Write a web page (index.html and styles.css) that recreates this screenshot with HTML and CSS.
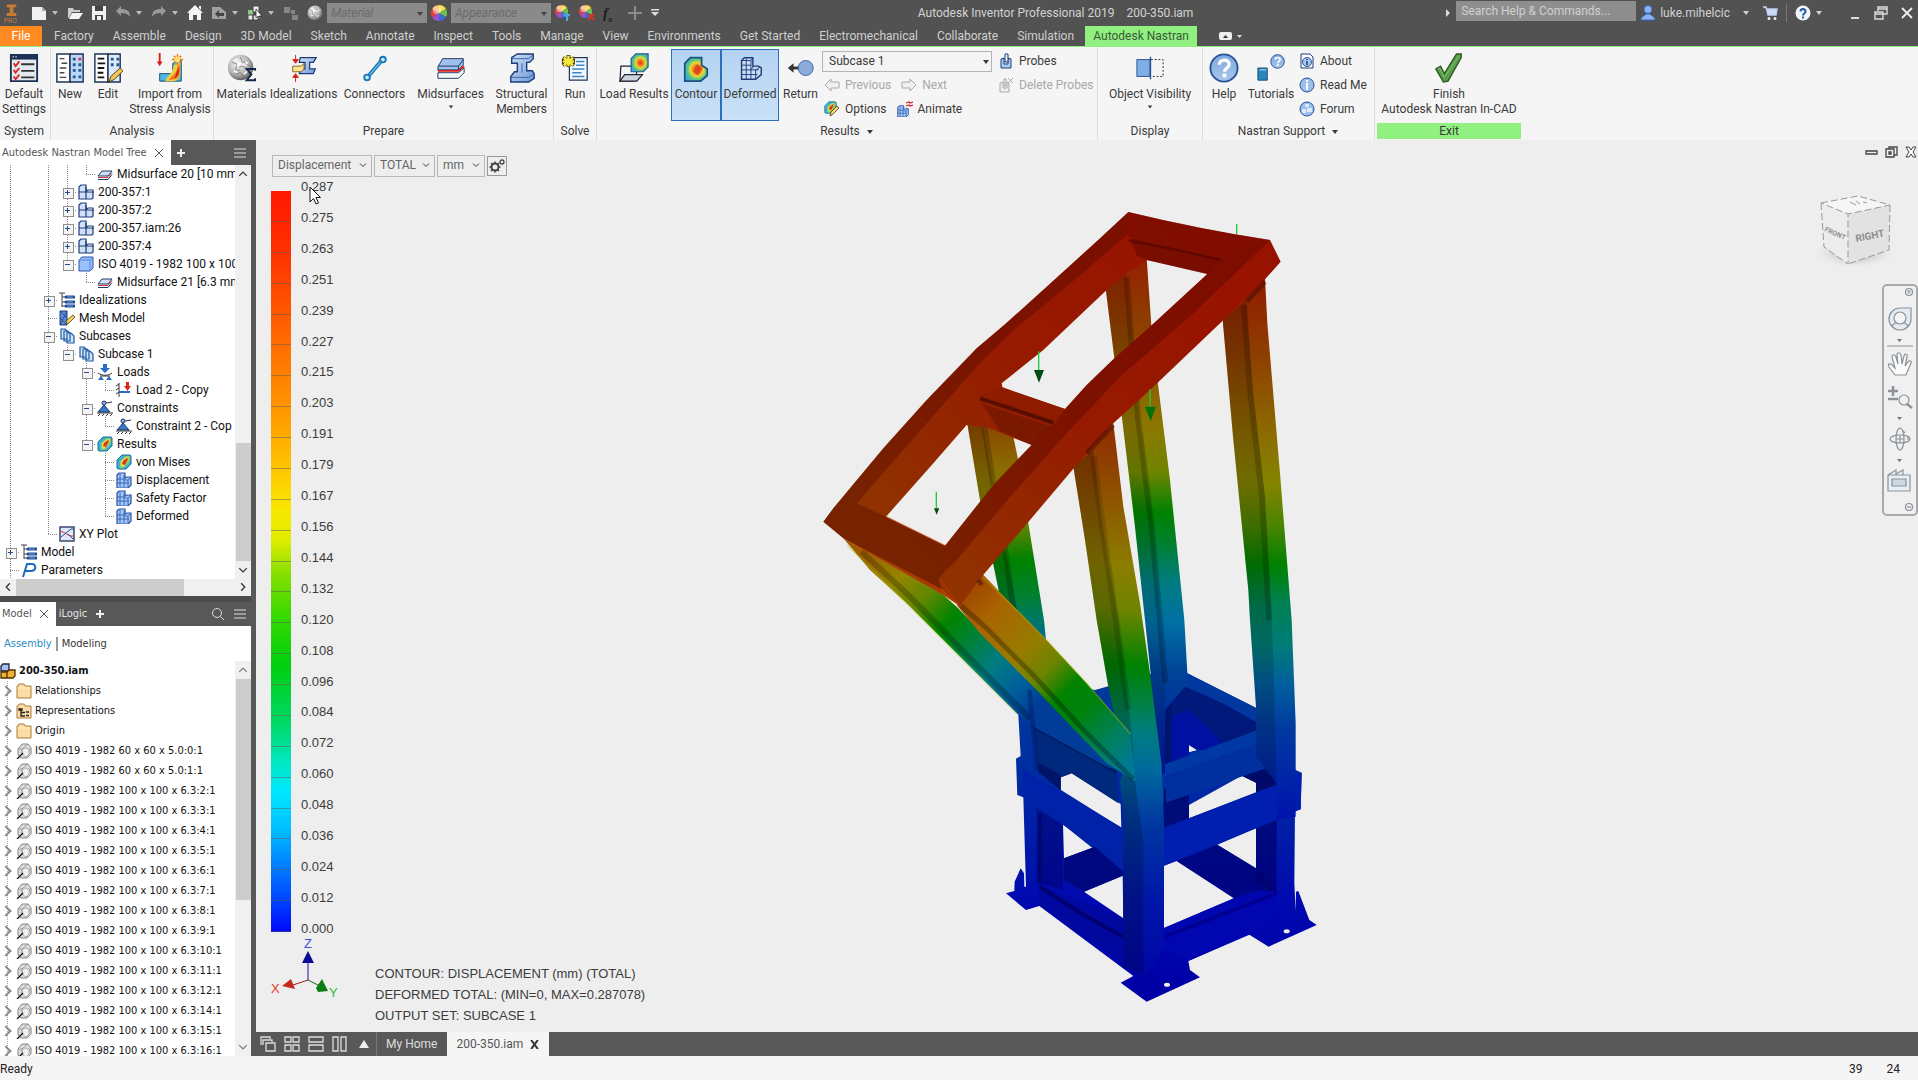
FILE: index.html
```
<!DOCTYPE html>
<html lang="en">
<head>
<meta charset="utf-8">
<title>Autodesk Inventor Professional 2019 - 200-350.iam</title>
<link rel="stylesheet" href="styles.css">
</head>
<body>
<svg class="sprite" aria-hidden="true">
  <defs>
    <radialGradient id="heat" cx=".55" cy=".5" r=".6"><stop offset="0" stop-color="#d8321c"/><stop offset=".3" stop-color="#f08a1e"/><stop offset=".5" stop-color="#e8d83c"/><stop offset=".7" stop-color="#5cc878"/><stop offset="1" stop-color="#38a8e0"/></radialGradient>
    <linearGradient id="steel" x1="0" y1="0" x2="1" y2="1"><stop offset="0" stop-color="#d4e4f8"/><stop offset="1" stop-color="#6a96d8"/></linearGradient>
    <linearGradient id="blueball" x1="0" y1="0" x2="0" y2="1"><stop offset="0" stop-color="#7ea8dc"/><stop offset="1" stop-color="#a8c6ec"/></linearGradient>
    <radialGradient id="stone" cx=".4" cy=".35" r=".7"><stop offset="0" stop-color="#fafafa"/><stop offset=".6" stop-color="#b4b4b4"/><stop offset="1" stop-color="#505050"/></radialGradient>
  </defs>
  <symbol id="caret" viewBox="0 0 8 8"><path d="M1 2h6L4 6z" fill="currentColor"/></symbol>
  <symbol id="chev" viewBox="0 0 8 8"><path d="M1 2.500l3 3 3-3" fill="none" stroke="currentColor"/></symbol>
  <symbol id="wheel" viewBox="0 0 16 16"><path d="M8 8V0a8 8 0 0 1 7 4z" fill="#f6e04a"/><path d="M8 8l7-4a8 8 0 0 1 0 8z" fill="#6cc04a"/><path d="M8 8l7 4a8 8 0 0 1-7 4z" fill="#3a6ad8"/><path d="M8 8v8a8 8 0 0 1-7-4z" fill="#a050c8"/><path d="M8 8l-7 4a8 8 0 0 1 0-8z" fill="#e04438"/><path d="M8 8L1 4a8 8 0 0 1 7-4z" fill="#f8a050"/><circle cx="6" cy="5" r="4" fill="#fff" opacity=".45"/></symbol>
  <symbol id="ball" viewBox="0 0 16 16"><circle cx="8" cy="8" r="7.500" fill="url(#stone)"/><path d="M3 5l3 1-1 3 3 1M8 2l1 3 3-1M7 8l3-1 2 3M5 12l3-1 2 3M12 6l2 2" stroke="#666" fill="none" stroke-width=".4"/><path d="M4 4l2-1M9 6l2 1M4 10l2 1M10 12l2-2M6 7l2-2M11 4l1 2" stroke="#fff" fill="none" stroke-width=".8"/></symbol>
  <symbol id="qmark" viewBox="0 0 32 32"><circle cx="16" cy="16" r="14.500" fill="url(#blueball)" stroke="#2a5298" stroke-width="2"/><path d="M11 12.500c0-6.500 10.500-6.500 10.500-.5 0 4-5 4-5 8" fill="none" stroke="#fff" stroke-width="3.600"/><rect x="14.500" y="22" width="4" height="4" fill="#fff"/></symbol>
  <symbol id="plate" viewBox="0 0 16 16"><path d="M1 10l4-5h10l-4 5z" fill="#cfe0f6" stroke="#223a66"/><path d="M1 11.500h10l4-5" fill="none" stroke="#d03a3a"/><path d="M1 13.500h10l4-5" fill="none" stroke="#223a66"/></symbol>
  <symbol id="asm" viewBox="0 0 16 16"><path d="M1 3l2-2h5v7h7v6l-1 1H1z" fill="#cfe0f8" stroke="#1e3c78" stroke-width="1.200"/><path d="M1 8h7M8 3v12M8 8l2-2h5v3" fill="none" stroke="#1e3c78" stroke-width="1.200"/></symbol>
  <symbol id="cube" viewBox="0 0 16 16"><path d="M1 4l3-3h11v11l-3 3H1z" fill="#9cc0ff" stroke="#2a52a8"/><path d="M1 4h11v11M12 4l3-3" fill="none" stroke="#5a86d8"/></symbol>
  <symbol id="ideal" viewBox="0 0 16 16"><path d="M0 1h6M3 1v14M3 5h4M3 10h4M3 14h4" fill="none" stroke="#444"/><path d="M7 5h8M7 10h8M7 14h8" stroke="#1e4a94" stroke-width="3" stroke-linecap="round"/><path d="M8 5h6M8 10h6M8 14h6" stroke="#6a9ee0"/></symbol>
  <symbol id="mesh" viewBox="0 0 16 16"><path d="M1 1h7v14H1z" fill="#5a8ad0" stroke="#1e3c78"/><path d="M1 15L8 1M1 8l7 7M1 1l7 7" stroke="#1e3c78" stroke-width=".7"/><path d="M7 14l1-4 6-5 2 2-6 6z" fill="#f4d060" stroke="#604010" stroke-width=".8"/></symbol>
  <symbol id="pages" viewBox="0 0 16 16"><path d="M2 1h4l2 2v8H2z M5 3h4l2 2v8H5z M8 5h4l3 3v7H8z" fill="#cfe4fa" stroke="#1e5aa0" stroke-width="1.200"/></symbol>
  <symbol id="loads" viewBox="0 0 16 16"><path d="M6 0h4v4h3L8 9 3 4h3z" fill="#2a6ac8"/><path d="M1 9c4 3 10 3 14 0M3 12h10" fill="none" stroke="#333"/><path d="M1 16l3-4 3 4zM9 16l3-4 3 4z" fill="#2a6ac8"/></symbol>
  <symbol id="load" viewBox="0 0 16 16"><path d="M3 1v14M0 4l3-2M0 8l3-2M0 12l3-2" stroke="#333"/><path d="M3 10h11" stroke="#2a6ac8" stroke-width="2"/><path d="M10 0h3v4h2l-3.500 5L8 4h2z" fill="#d8281c"/></symbol>
  <symbol id="constr" viewBox="0 0 16 16"><path d="M1 12l6-7 6 7z" fill="#3a78d0" stroke="#1a3060"/><circle cx="7" cy="3" r="2" fill="#8ab8f0" stroke="#1a3060"/><path d="M9 3l6-1M0 13h16M1 16l2-2M5 16l2-2M9 16l2-2M13 16l2-2" stroke="#333"/></symbol>
  <symbol id="result" viewBox="0 0 16 16"><path d="M1 6l5-5h8l1 1v8l-5 5H2l-1-1z" fill="#38b4d8" stroke="#20688c"/><path d="M4 14V7l6-5h4v5l-6 7z" fill="#88d070"/><path d="M5 12V7l5-4 3 1-3 5-3 4z" fill="#f0d840"/><path d="M6 10l1-3 4-3 1 1-3 6z" fill="#d8381c"/></symbol>
  <symbol id="deform" viewBox="0 0 16 16"><path d="M1 3l2-2h6v5l2-1h4v8l-3 3H1z" fill="#a4c8fc" stroke="#2450a0" stroke-width="1.200"/><path d="M1 7h7M1 11h12M4 2v13M8 3v12M12 8v7M8 8h4l3-3" fill="none" stroke="#2450a0" stroke-width=".8"/></symbol>
  <symbol id="plot" viewBox="0 0 16 16"><path d="M1 1h14v14H1z" fill="#dfe8f8" stroke="#3a4a70" stroke-width="1.500"/><path d="M1 6c4-2 7 5 14 4" fill="none" stroke="#d03030"/><path d="M2 11L12 3h3M9 8l5 5" fill="none" stroke="#2a4a90"/></symbol>
  <symbol id="param" viewBox="0 0 16 16"><path d="M2 15L6 2h5c5 0 4 7-1 7H4" fill="none" stroke="#1e6ac0" stroke-width="2"/></symbol>
  <symbol id="folder" viewBox="0 0 16 16"><path d="M1 15V3h1l1-2h5l1 2h6v12z" fill="#fbdca4" stroke="#a87c3c"/><path d="M2 5h12" stroke="#fff0cc"/></symbol>
  <symbol id="folderrep" viewBox="0 0 16 16"><path d="M1 15V3h1l1-2h5l1 2h6v12z" fill="#fbdca4" stroke="#a87c3c"/><path d="M3 6h3v1H3zM5 7v6h4M5 9.500h4M10 9h3M10 12.500h3" fill="none" stroke="#222" stroke-width="1.300"/></symbol>
  <symbol id="part" viewBox="0 0 16 16"><path d="M2 6l4-5h6l3 4v6l-4 4H5l-3-3z" fill="#dedede" stroke="#848484"/><path d="M2 6h4l6-5M6 6v5M12 9l3-4M11 10v5" stroke="#9c9c9c" fill="none"/><path d="M6 7l3-2 4 1v5l-3 3-3-2z" fill="#f0f0f0" stroke="#a0a0a0" stroke-width=".8"/><path d="M1 16l6-6" stroke="#111" stroke-width="1.300"/></symbol>
  <symbol id="root" viewBox="0 0 16 16"><path d="M1 3l2-2h6v7H1z" fill="#a8c0f0" stroke="#1a2440" stroke-width="1.300"/><path d="M1 9h6v6H1zM7 9l2-2h6v6l-2 2H7z" fill="#f4b030" stroke="#4a3000" stroke-width="1.300"/></symbol>
</svg>

<header class="titlebar">
  <div class="quick">
    <svg class="logo" viewBox="0 0 24 24"><path d="M7 3h10v3h-3v6h3v3H7v-3h3V6H7z" fill="#c87a34"/><text x="4" y="22" font-size="7" fill="#c87a34">PRO</text></svg>
    <svg class="i16" viewBox="0 0 16 16"><path d="M1 2h10l4 4v9H1z" fill="#f0f0f0"/><path d="M11 2v4h4z" fill="#aaa"/></svg>
    <svg class="i8 tuck"><use href="#caret"/></svg>
    <svg class="i16" viewBox="0 0 16 16"><path d="M1 3h5l1 2h6v2H5l-3 6H1z" fill="#ccc"/><path d="M5 8h11l-4 6H2z" fill="#f4f4f4"/></svg>
    <svg class="i16" viewBox="0 0 16 16"><path d="M1 1h14v14H1z" fill="#f0f0f0"/><path d="M4 1h8v5H4zM4 10h8v5H4z" fill="#444"/><path d="M6 11h4v4H6z" fill="#f0f0f0"/></svg>
    <svg class="i16" viewBox="0 0 16 16"><path d="M1 6l5-5v3c6 0 9 2 9 8-2-3-4-4-9-4v3z" fill="#999"/></svg>
    <svg class="i8 tuck"><use href="#caret"/></svg>
    <svg class="i16" viewBox="0 0 16 16"><path d="M15 6l-5-5v3c-6 0-9 2-9 8 2-3 4-4 9-4v3z" fill="#999"/></svg>
    <svg class="i8 tuck"><use href="#caret"/></svg>
    <svg class="i16" viewBox="0 0 16 16"><path d="M8 0l8 8h-2v7h-4v-5H6v5H2V8H0z" fill="#f4f4f4"/><path d="M12 1h2v4l-2-2z" fill="#f4f4f4"/></svg>
    <svg class="i16" viewBox="0 0 16 16"><path d="M1 2h8l6 5v7H1z" fill="#a0a0a0"/><path d="M4 9l4-4v3h5v3H8v2z" fill="#444"/></svg>
    <svg class="i8 tuck"><use href="#caret"/></svg>
    <svg class="i16" viewBox="0 0 16 16"><path d="M1 5h5v5H1z" fill="#8ac88a"/><path d="M6 1h6v6H6zM1 10h5v5H1zM6 10h5v5H6z" fill="#ececec" stroke="#444"/><path d="M9 4v9l2-2 2 4 1-1-2-3h3z" fill="#fff" stroke="#222" stroke-width=".7"/></svg>
    <svg class="i8 tuck"><use href="#caret"/></svg>
    <svg class="i16" viewBox="0 0 16 16"><path d="M1 2h6v6H1zM8 5h4v4H8zM9 10h6v5H9z" fill="#858585"/></svg>
    <svg class="i16"><use href="#ball"/></svg>
    <label class="tcombo tuck"><select aria-label="Material"><option>Material</option></select><svg class="i8"><use href="#caret"/></svg></label>
    <svg class="i16 tuck"><use href="#wheel"/></svg>
    <label class="tcombo tuck"><select aria-label="Appearance"><option>Appearance</option></select><svg class="i8"><use href="#caret"/></svg></label>
    <svg class="i16 tuck" viewBox="0 0 16 16"><use href="#wheel" width="13" height="13"/><path d="M7 9h9l-3 3v4h-2v-4z" fill="#48a8e8"/></svg>
    <svg class="i16" viewBox="0 0 16 16"><use href="#wheel" width="13" height="13"/><path d="M9 9l6 6M15 9l-6 6" stroke="#d83420" stroke-width="2"/></svg>
    <span class="fx">f<sub>x</sub></span>
    <svg class="i16" viewBox="0 0 16 16"><path d="M8 1v14M1 8h14" stroke="#8c8c8c" stroke-width="2"/></svg>
    <svg class="i8" viewBox="0 0 8 8"><path d="M0 0h8v1.500H0zM0 3h8L4 7z" fill="#ddd"/></svg>
  </div>
  <div class="apptitle"><span>Autodesk Inventor Professional 2019</span><span>200-350.iam</span></div>
  <div class="account">
    <svg class="i8" viewBox="0 0 8 8"><path d="M2 0l4 4-4 4z" fill="#ddd"/></svg>
    <input class="search" type="text" aria-label="Search" placeholder="Search Help &amp; Commands...">
    <svg class="i16" viewBox="0 0 16 16"><circle cx="8" cy="4.500" r="4" fill="#8ab4f0" stroke="#3a66b8"/><path d="M1 15c0-4 4-4 5-6h4c1 2 5 2 5 6z" fill="#8ab4f0" stroke="#3a66b8"/></svg>
    <span class="user">luke.mihelcic</span>
    <svg class="i8"><use href="#caret"/></svg>
    <svg class="i16" viewBox="0 0 16 16"><path d="M1 2h3l2 8h8l1-6H5" fill="#d0dcf4" stroke="#c0d0f0" stroke-width="1.400"/><circle cx="7" cy="13.500" r="1.500" fill="#eee"/><circle cx="13" cy="13.500" r="1.500" fill="#eee"/></svg>
    <i class="rule"></i>
    <svg class="i16" viewBox="0 0 16 16"><circle cx="8" cy="8" r="7.500" fill="#f0f4fc"/><path d="M5.500 6.500c0-3.500 5-3.500 5 0 0 2-2.500 2-2.500 4" fill="none" stroke="#2a58a8" stroke-width="2"/><path d="M7 11.500h2v2H7z" fill="#2a58a8"/></svg>
    <svg class="i8"><use href="#caret"/></svg>
    <svg class="i16 win" viewBox="0 0 16 16"><path d="M4 12h8v2H4z" fill="#ddd"/></svg>
    <svg class="i16 win" viewBox="0 0 16 16"><path d="M5 6V2h9v7h-4M5 4h9M2 7h8v7H2zM2 9h8" fill="none" stroke="#ddd" stroke-width="1.400"/></svg>
    <svg class="i16 win" viewBox="0 0 16 16"><path d="M3 3l10 10M13 3L3 13" stroke="#eee" stroke-width="1.800"/></svg>
  </div>
</header>

<nav class="tabs">
  <button class="file">File</button><button>Factory</button><button>Assemble</button><button>Design</button><button>3D Model</button><button>Sketch</button><button>Annotate</button><button>Inspect</button><button>Tools</button><button>Manage</button><button>View</button><button>Environments</button><button>Get Started</button><button>Electromechanical</button><button>Collaborate</button><button>Simulation</button><button class="on">Autodesk Nastran</button>
  <svg class="collapse" viewBox="0 0 24 12"><rect x="0" y="2" width="13" height="8" rx="2" fill="#eee"/><path d="M4 8h5L6.500 5z" fill="#333"/><path d="M18 5h5l-2.500 3z" fill="#ddd"/></svg>
</nav>

<section class="ribbon">
  <div class="panel p-system">
    <div class="tools">
      <button class="tool"><svg viewBox="0 0 32 32"><path d="M2 2h28v28H2z" fill="#e4e9f0" stroke="#1c3054" stroke-width="2"/><path d="M2 2h28v5H2z" fill="#1c3054"/><path d="M4 4h1M7 4h1" stroke="#fff" stroke-width="1.500"/><path d="M13 12h14M13 19h14M13 26h14" stroke="#333" stroke-width="2"/><path d="M5 11l2 3 4-5M5 18l2 3 4-5M5 25l2 3 4-5" stroke="#d82820" fill="none" stroke-width="2"/></svg>Default<br>Settings</button>
    </div>
    <h2>System</h2>
  </div>
  <div class="panel p-analysis">
    <div class="tools">
      <button class="tool"><svg viewBox="0 0 32 32"><path d="M2 1h14v30H2z" fill="#fdfdfd" stroke="#1c3054" stroke-width="1.500"/><path d="M16 1h14v30H16z" fill="#bcd8f6" stroke="#1c3054" stroke-width="1.500"/><path d="M5 6h5M7 11h6M5 16h7M5 21h5M5 26h7" stroke="#444" stroke-width="1.500"/><path d="M19 5h3v3h-3zM19 11h3v3h-3zM25 11h3v3h-3zM19 17h3v3h-3zM25 17h3v3h-3zM19 24h3v3h-3zM25 24h3v3h-3z" fill="#1e5a94"/><path d="M25 5h3v3h-3z" fill="#d83050"/></svg>New</button>
      <button class="tool"><svg viewBox="0 0 32 32"><path d="M2 1h14v30H2z" fill="#fdfdfd" stroke="#1c3054" stroke-width="1.500"/><path d="M16 1h13v30H16z" fill="#dcebfb" stroke="#1c3054" stroke-width="1.500"/><path d="M5 6h7M5 11h8M5 16h7M5 21h6M5 26h7" stroke="#111" stroke-width="2"/><path d="M19 5h3v3h-3zM25 5h3v3h-3zM19 11h3v3h-3zM25 11h3v3h-3z" fill="#1e5a94"/><path d="M17 31l2-6 10-9 3 3-9 9z" fill="#f4ca58" stroke="#4a3410"/></svg>Edit</button>
      <button class="tool"><svg viewBox="0 0 32 32"><path d="M4 0h2v9h2l-3 5-3-5h2z" fill="#d82018"/><path d="M5 22h14V11l4-3h5v22H5z" fill="#50b8e0" stroke="#124a70"/><path d="M11 30c2-7 8-7 9-17l7-3v12c-1 6-4 8-8 8z" fill="#f0d040"/><path d="M15 29c1-5 8-5 9-15l3-2c0 10-1 16-7 16z" fill="#ee7a20"/><path d="M21 27c1-5 3-8 4-12 1 5 1 10-4 12z" fill="#d82818"/><path d="M24 1v12M18 7h12M20 3l8 8M28 3l-8 8" stroke="#e87a18" stroke-width="1.600"/><circle cx="24" cy="7" r="3" fill="#ffe070"/></svg>Import from<br>Stress Analysis</button>
    </div>
    <h2>Analysis</h2>
  </div>
  <div class="panel p-prepare">
    <div class="tools">
      <button class="tool"><svg viewBox="0 0 32 32"><use href="#ball" width="29" height="31"/><path d="M30 19v-2H21l5 6-5 6h9v-2" fill="none" stroke="#14284c" stroke-width="2"/></svg>Materials</button>
      <button class="tool"><svg viewBox="0 0 32 32"><path d="M12 5h17l-3 5h-4v7h6l-2 5H11l2-5h4v-7h-6z" fill="url(#steel)" stroke="#1e3c78" stroke-width="1.300"/><path d="M4 14h9l3-3v6l-3 3H4z" fill="#fbe494" stroke="#8a5c10"/><path d="M7 2v7M7 31v-7M4 7l3 4 3-4zM4 26l3-4 3 4z" stroke="#d82018" fill="#d82018"/></svg>Idealizations</button>
      <button class="tool"><svg viewBox="0 0 32 32"><path d="M7 27L24 7" stroke="#14609c" stroke-width="4"/><path d="M7 27L24 7" stroke="#48b8f0" stroke-width="2"/><circle cx="24.500" cy="7" r="3" fill="#c8ecff" stroke="#1878b8" stroke-width="2"/><circle cx="7.500" cy="26" r="3" fill="#c8ecff" stroke="#1878b8" stroke-width="2"/></svg>Connectors</button>
      <button class="tool"><svg viewBox="0 0 32 32"><path d="M2 15l5-9h22v7l-5 5H2z" fill="#9cc0f0" stroke="#1e3460"/><path d="M2 14h22l5-7M24 14v4" fill="none" stroke="#1e3460"/><path d="M2 19h22l6-5" fill="none" stroke="#d82018" stroke-width="2"/><path d="M2 21h22l6-5v5l-6 6H2z" fill="#f4f6fa" stroke="#1e3460"/></svg>Midsurfaces<svg class="i8"><use href="#caret"/></svg></button>
      <button class="tool"><svg viewBox="0 0 32 32"><path d="M5 5l6-4h17v5l-4 4h-3v9h6l2 3v5l-6 4H4v-6l4-5h3V11H5z" fill="url(#steel)" stroke="#1e3c78" stroke-width="1.500"/><path d="M5 6h18l5-4M16 11v10M4 26h19l6-4" fill="none" stroke="#3a62a8"/></svg>Structural<br>Members</button>
    </div>
    <h2>Prepare</h2>
  </div>
  <div class="panel p-solve">
    <div class="tools">
      <button class="tool"><svg viewBox="0 0 32 32"><path d="M10 5h19v24H10z" fill="#f2f8ff" stroke="#1e3460" stroke-width="1.300"/><path d="M17 9h9M17 13h9M13 17h13M13 21h10M13 25h13" stroke="#3a86c8" stroke-width="1.500"/><path d="M9 2v13M3 5l12 8M15 5L3 13M2 9h14" stroke="#3c3800" stroke-width="4"/><path d="M9 3v11M4 5l10 8M14 5L4 13M3 9h12" stroke="#f6e840" stroke-width="2.600"/></svg>Run</button>
    </div>
    <h2>Solve</h2>
  </div>
  <div class="panel p-results">
    <div class="tools">
      <button class="tool"><svg viewBox="0 0 32 32"><path d="M2 14h19l-5 16H1z" fill="#f2f4f8" stroke="#223" stroke-width="1.300"/><path d="M1 30l5-7h19l-6 7z" fill="#ccd4e0" stroke="#223" stroke-width="1.300"/><path d="M13 6l5-5h13v14l-5 5H13z" fill="url(#heat)" stroke="#20588c" stroke-width="1.300"/></svg>Load Results</button>
      <button class="tool on"><svg viewBox="0 0 32 32"><path d="M4 11l6-6h12v8l6 4v7l-7 6H4z" fill="url(#heat)" stroke="#1c5080" stroke-width="1.800"/><path d="M13 20l4-8 6 4-5 8z" fill="#e0401c" opacity=".8"/></svg>Contour</button>
      <button class="tool on"><svg viewBox="0 0 32 32"><path d="M7 8l3-3h9v9h6l3 2v7l-6 5H7z" fill="#c8dcf4" stroke="#1e3c78" stroke-width="1.500"/><path d="M7 13h10M7 18h18M7 23h17M12 6v22M17 8v20M17 18l3-4M22 18v10M22 18l5-3M17 8l2-3M7 8h10" fill="none" stroke="#1e3c78"/></svg>Deformed</button>
      <button class="tool"><svg viewBox="0 0 32 32"><circle cx="21" cy="16" r="8" fill="#8cacdc" stroke="#3a62a8"/><path d="M13 16H6" stroke="#333" stroke-width="3"/><path d="M8 11v10l-6-5z" fill="#333"/></svg>Return</button>
      <div class="rcol">
        <label class="subcase"><select aria-label="Subcase"><option>Subcase 1</option></select><svg class="i8"><use href="#caret"/></svg></label>
        <div class="rrow"><button class="mini off"><svg viewBox="0 0 16 16"><path d="M1 8l6-6v3h8v6H7v3z" fill="#f0f0f0" stroke="#aaa"/></svg>Previous</button><button class="mini off"><svg viewBox="0 0 16 16"><path d="M15 8L9 2v3H1v6h8v3z" fill="#f0f0f0" stroke="#aaa"/></svg>Next</button></div>
        <div class="rrow"><button class="mini"><svg viewBox="0 0 16 16"><use href="#result" width="13" height="13"/><path d="M6 15l1-4 6-6 2 2-6 6z" fill="#f4d870" stroke="#4a3410" stroke-width=".8"/></svg>Options</button><button class="mini"><svg viewBox="0 0 16 16"><use href="#deform" y="4" width="12" height="12"/><path d="M9 2l3-1 1 1 3-1M9 5l3-1 1 1 3-1" stroke="#d02828" fill="none" stroke-width="1.300"/></svg>Animate</button></div>
      </div>
      <div class="rcol">
        <button class="mini"><svg viewBox="0 0 16 16"><path d="M3 6l3-1v6h4V5l3 1v9H3z" fill="#a8ccf4" stroke="#1e3c78"/><path d="M7 1h3v8H7z" fill="#e8f2fc" stroke="#1e3c78"/></svg>Probes</button>
        <button class="mini off"><svg viewBox="0 0 16 16"><path d="M2 6l3-1v6h4V5l2 1v9H2z M6 2h2v7H6z" fill="#eee" stroke="#aaa"/><path d="M10 1l5 5M15 1l-5 5" stroke="#aaa"/></svg>Delete Probes</button>
      </div>
    </div>
    <h2>Results <svg class="i8"><use href="#caret"/></svg></h2>
  </div>
  <div class="panel p-display">
    <div class="tools">
      <button class="tool"><svg viewBox="0 0 32 32"><path d="M2 7h14v18H2z" fill="#7eaee4" stroke="#2a5298"/><path d="M17 7h13v18H17" fill="none" stroke="#222" stroke-dasharray="2 2"/><path d="M16.500 4v24" stroke="#2a5298" stroke-width="1.500"/></svg>Object Visibility<svg class="i8"><use href="#caret"/></svg></button>
    </div>
    <h2>Display</h2>
  </div>
  <div class="panel p-support">
    <div class="tools">
      <button class="tool"><svg><use href="#qmark"/></svg>Help</button>
      <button class="tool"><svg viewBox="0 0 32 32"><use href="#qmark" x="15" y="1" width="16" height="16"/><path d="M2 16h10v13H2z" fill="#2a86bc" stroke="#1a4c74"/><path d="M4 18h7" stroke="#bfe4f8"/></svg>Tutorials</button>
      <div class="rcol">
        <button class="mini"><svg viewBox="0 0 16 16"><path d="M2 1h9l3 3v11H2z" fill="#fff" stroke="#1e3c78"/><circle cx="8" cy="9" r="4.500" fill="#a8c8f0" stroke="#2a5298"/><path d="M8 6v1M8 8v4" stroke="#1e3c78" stroke-width="1.500"/></svg>About</button>
        <button class="mini"><svg viewBox="0 0 16 16"><circle cx="8" cy="8" r="7" fill="#9cc0ec" stroke="#2a5298"/><path d="M8 3v2M8 6v7" stroke="#fff" stroke-width="2"/></svg>Read Me</button>
        <button class="mini"><svg viewBox="0 0 16 16"><circle cx="8" cy="8" r="7" fill="#9cc0ec" stroke="#2a5298"/><path d="M3 8h4v4H3zM8 7h5v4H8zM6 3h4v3H6z" fill="#dcecfc"/></svg>Forum</button>
      </div>
    </div>
    <h2>Nastran Support <svg class="i8"><use href="#caret"/></svg></h2>
  </div>
  <div class="panel p-exit">
    <div class="tools">
      <button class="tool"><svg viewBox="0 0 32 32"><path d="M2 17l5-3 4 8L24 1h5v4L15 30l-5 1z" fill="#5a9c4c" stroke="#2c5c24" stroke-width="1.500"/><path d="M4 17l2-1 5 10L27 3" fill="none" stroke="#88c074"/></svg>Finish<br>Autodesk Nastran In-CAD</button>
    </div>
    <h2>Exit</h2>
  </div>
</section>

<main class="work">
  <aside class="side">
    <div class="sidetabs">
      <div class="stab on">Autodesk Nastran Model Tree <svg class="x" viewBox="0 0 8 8"><path d="M0 0l8 8M8 0L0 8" stroke="#555"/></svg></div>
      <svg class="plus" viewBox="0 0 8 8"><path d="M4 0v8M0 4h8" stroke="#eee" stroke-width="2"/></svg>
      <svg class="menu" viewBox="0 0 12 12"><path d="M0 2h12M0 6h12M0 10h12" stroke="#ddd"/></svg>
    </div>
    <div class="upper">
      <ul class="tree">
        <li><i class="v"></i><i></i><i class="v"></i><i class="v"></i><i class="l"></i><svg><use href="#plate"/></svg>Midsurface 20 [10 mm</li>
        <li><i class="v"></i><i></i><i class="v"></i><i class="t p"></i><svg><use href="#asm"/></svg>200-357:1</li>
        <li><i class="v"></i><i></i><i class="v"></i><i class="t p"></i><svg><use href="#asm"/></svg>200-357:2</li>
        <li><i class="v"></i><i></i><i class="v"></i><i class="t p"></i><svg><use href="#asm"/></svg>200-357.iam:26</li>
        <li><i class="v"></i><i></i><i class="v"></i><i class="t p"></i><svg><use href="#asm"/></svg>200-357:4</li>
        <li><i class="v"></i><i></i><i class="v"></i><i class="l m"></i><svg><use href="#cube"/></svg>ISO 4019 - 1982 100 x 100 x</li>
        <li><i class="v"></i><i></i><i class="v"></i><i></i><i class="l"></i><svg><use href="#plate"/></svg>Midsurface 21 [6.3 mm</li>
        <li><i class="v"></i><i></i><i class="t p"></i><svg><use href="#ideal"/></svg>Idealizations</li>
        <li><i class="v"></i><i></i><i class="t"></i><svg><use href="#mesh"/></svg>Mesh Model</li>
        <li><i class="v"></i><i></i><i class="t m"></i><svg><use href="#pages"/></svg>Subcases</li>
        <li><i class="v"></i><i></i><i class="v"></i><i class="l m"></i><svg><use href="#pages"/></svg>Subcase 1</li>
        <li><i class="v"></i><i></i><i class="v"></i><i></i><i class="t m"></i><svg><use href="#loads"/></svg>Loads</li>
        <li><i class="v"></i><i></i><i class="v"></i><i></i><i class="v"></i><i class="l"></i><svg><use href="#load"/></svg>Load 2 - Copy</li>
        <li><i class="v"></i><i></i><i class="v"></i><i></i><i class="t m"></i><svg><use href="#constr"/></svg>Constraints</li>
        <li><i class="v"></i><i></i><i class="v"></i><i></i><i class="v"></i><i class="l"></i><svg><use href="#constr"/></svg>Constraint 2 - Cop</li>
        <li><i class="v"></i><i></i><i class="v"></i><i></i><i class="l m"></i><svg><use href="#result"/></svg>Results</li>
        <li><i class="v"></i><i></i><i class="v"></i><i></i><i></i><i class="t"></i><svg><use href="#result"/></svg>von Mises</li>
        <li><i class="v"></i><i></i><i class="v"></i><i></i><i></i><i class="t"></i><svg><use href="#deform"/></svg>Displacement</li>
        <li><i class="v"></i><i></i><i class="v"></i><i></i><i></i><i class="t"></i><svg><use href="#deform"/></svg>Safety Factor</li>
        <li><i class="v"></i><i></i><i class="v"></i><i></i><i></i><i class="l"></i><svg><use href="#deform"/></svg>Deformed</li>
        <li><i class="v"></i><i></i><i class="l"></i><svg><use href="#plot"/></svg>XY Plot</li>
        <li><i class="t p"></i><svg><use href="#ideal"/></svg>Model</li>
        <li><i class="t"></i><svg><use href="#param"/></svg>Parameters</li>
      </ul>
      <div class="vbar"><svg class="up"><use href="#chev"/></svg><span class="rest"></span><span class="thumb"></span><svg><use href="#chev"/></svg></div>
    </div>
    <div class="hbar"><svg class="left"><use href="#chev"/></svg><span class="thumb"></span><svg class="right"><use href="#chev"/></svg></div>
    <div class="sidetabs second">
      <div class="stab on">Model <svg class="x" viewBox="0 0 8 8"><path d="M0 0l8 8M8 0L0 8" stroke="#555"/></svg></div>
      <div class="stab">iLogic</div>
      <svg class="plus" viewBox="0 0 8 8"><path d="M4 0v8M0 4h8" stroke="#eee" stroke-width="2"/></svg>
      <svg class="menu" viewBox="0 0 12 12"><circle cx="5" cy="5" r="4.500" fill="none" stroke="#ddd"/><path d="M8.500 8.500L12 12" stroke="#ddd"/></svg>
      <svg class="menu" viewBox="0 0 12 12"><path d="M0 2h12M0 6h12M0 10h12" stroke="#ddd"/></svg>
    </div>
    <div class="modes"><a href="#assembly" class="on">Assembly</a><a href="#modeling">Modeling</a></div>
    <div class="lower">
      <ul class="browser">
        <li class="rootrow"><svg><use href="#root"/></svg>200-350.iam</li>
        <li><b></b><svg><use href="#folder"/></svg>Relationships</li>
        <li><b></b><svg><use href="#folderrep"/></svg>Representations</li>
        <li><b></b><svg><use href="#folder"/></svg>Origin</li>
        <li><b></b><svg><use href="#part"/></svg>ISO 4019 - 1982 60 x 60 x 5.0:0:1</li>
        <li><b></b><svg><use href="#part"/></svg>ISO 4019 - 1982 60 x 60 x 5.0:1:1</li>
        <li><b></b><svg><use href="#part"/></svg>ISO 4019 - 1982 100 x 100 x 6.3:2:1</li>
        <li><b></b><svg><use href="#part"/></svg>ISO 4019 - 1982 100 x 100 x 6.3:3:1</li>
        <li><b></b><svg><use href="#part"/></svg>ISO 4019 - 1982 100 x 100 x 6.3:4:1</li>
        <li><b></b><svg><use href="#part"/></svg>ISO 4019 - 1982 100 x 100 x 6.3:5:1</li>
        <li><b></b><svg><use href="#part"/></svg>ISO 4019 - 1982 100 x 100 x 6.3:6:1</li>
        <li><b></b><svg><use href="#part"/></svg>ISO 4019 - 1982 100 x 100 x 6.3:7:1</li>
        <li><b></b><svg><use href="#part"/></svg>ISO 4019 - 1982 100 x 100 x 6.3:8:1</li>
        <li><b></b><svg><use href="#part"/></svg>ISO 4019 - 1982 100 x 100 x 6.3:9:1</li>
        <li><b></b><svg><use href="#part"/></svg>ISO 4019 - 1982 100 x 100 x 6.3:10:1</li>
        <li><b></b><svg><use href="#part"/></svg>ISO 4019 - 1982 100 x 100 x 6.3:11:1</li>
        <li><b></b><svg><use href="#part"/></svg>ISO 4019 - 1982 100 x 100 x 6.3:12:1</li>
        <li><b></b><svg><use href="#part"/></svg>ISO 4019 - 1982 100 x 100 x 6.3:14:1</li>
        <li><b></b><svg><use href="#part"/></svg>ISO 4019 - 1982 100 x 100 x 6.3:15:1</li>
        <li><b></b><svg><use href="#part"/></svg>ISO 4019 - 1982 100 x 100 x 6.3:16:1</li>
      </ul>
      <div class="vbar light"><svg class="up"><use href="#chev"/></svg><span class="thumb"></span><span class="rest"></span><svg><use href="#chev"/></svg></div>
    </div>
  </aside>

  <section class="view">
    <div class="canvas">
      <svg class="model" viewBox="256 140 1662 892" role="img" aria-label="Displacement contour on deformed frame">
        <defs>
          <linearGradient id="gB" gradientUnits="userSpaceOnUse" x1="0" y1="200" x2="0" y2="1700"><stop offset="0" stop-color="#942000"/><stop offset=".16" stop-color="#8c4400"/><stop offset=".34" stop-color="#8c7800"/><stop offset=".43" stop-color="#708400"/><stop offset=".51" stop-color="#008200"/><stop offset=".57" stop-color="#00802c"/><stop offset=".65" stop-color="#007c80"/><stop offset=".73" stop-color="#0070a4"/><stop offset=".83" stop-color="#004498"/><stop offset="1" stop-color="#001ca0"/></linearGradient>
          <linearGradient id="gC" gradientUnits="userSpaceOnUse" x1="0" y1="680" x2="30" y2="1380"><stop offset="0" stop-color="#8a3a00"/><stop offset=".25" stop-color="#8a6a00"/><stop offset=".42" stop-color="#808200"/><stop offset=".52" stop-color="#5c8200"/><stop offset=".65" stop-color="#008200"/><stop offset=".8" stop-color="#00802c"/><stop offset=".9" stop-color="#007a60"/><stop offset="1" stop-color="#006a90"/></linearGradient>
          <linearGradient id="gD" gradientUnits="userSpaceOnUse" x1="0" y1="270" x2="0" y2="1880"><stop offset="0" stop-color="#901a00"/><stop offset=".15" stop-color="#8e4200"/><stop offset=".29" stop-color="#8c6c00"/><stop offset=".38" stop-color="#848400"/><stop offset=".46" stop-color="#488400"/><stop offset=".53" stop-color="#008200"/><stop offset=".6" stop-color="#008050"/><stop offset=".68" stop-color="#007c78"/><stop offset=".75" stop-color="#00609c"/><stop offset=".83" stop-color="#003ca0"/><stop offset="1" stop-color="#0014ac"/></linearGradient>
          <linearGradient id="gE" gradientUnits="userSpaceOnUse" x1="0" y1="700" x2="-60" y2="2380"><stop offset="0" stop-color="#903000"/><stop offset=".12" stop-color="#8e5600"/><stop offset=".23" stop-color="#8c7c00"/><stop offset=".31" stop-color="#708400"/><stop offset=".41" stop-color="#008200"/><stop offset=".47" stop-color="#00803c"/><stop offset=".53" stop-color="#007c80"/><stop offset=".59" stop-color="#006c9c"/><stop offset=".69" stop-color="#0038a0"/><stop offset=".82" stop-color="#0018a8"/><stop offset="1" stop-color="#0000a8"/></linearGradient>
          <linearGradient id="gF" gradientUnits="userSpaceOnUse" x1="180" y1="1080" x2="690" y2="1570"><stop offset="0" stop-color="#a05c00"/><stop offset=".2" stop-color="#948400"/><stop offset=".34" stop-color="#608800"/><stop offset=".48" stop-color="#008400"/><stop offset=".62" stop-color="#008040"/><stop offset=".75" stop-color="#007c84"/><stop offset=".9" stop-color="#005c9c"/><stop offset="1" stop-color="#003c98"/></linearGradient>
          <linearGradient id="gG" gradientUnits="userSpaceOnUse" x1="480" y1="1210" x2="980" y2="1730"><stop offset="0" stop-color="#a04400"/><stop offset=".15" stop-color="#a86400"/><stop offset=".36" stop-color="#967c00"/><stop offset=".48" stop-color="#6c8400"/><stop offset=".6" stop-color="#008400"/><stop offset=".72" stop-color="#008210"/><stop offset=".86" stop-color="#008058"/><stop offset="1" stop-color="#007a94"/></linearGradient>
          <linearGradient id="gTop" gradientUnits="userSpaceOnUse" x1="1300" y1="150" x2="350" y2="1150"><stop offset="0" stop-color="#981200"/><stop offset=".5" stop-color="#961a00"/><stop offset="1" stop-color="#903400"/></linearGradient>
          <linearGradient id="gBase" gradientUnits="userSpaceOnUse" x1="0" y1="250" x2="0" y2="1235"><stop offset="0" stop-color="#003c98"/><stop offset=".25" stop-color="#0030a0"/><stop offset=".5" stop-color="#001ca8"/><stop offset=".7" stop-color="#0008b0"/><stop offset="1" stop-color="#0000a4"/></linearGradient>
        </defs>
        <g transform="translate(800 190) scale(.333333)">
          <g transform="translate(540 1200)">
            <path fill="url(#gBase)" fill-rule="evenodd" d="M115 375L140 255 345 300 390 287 520 250H622L830 355 880 400 947 540 965 548 962 658 945 663 943 880 947 963 948 905 955 903 988 990 1010 1005 866 1070 808 1034 625 1113 630 1140 660 1162 500 1235 422 1178 460 1158 178 948 138 960 78 910 103 903 104 875 122 835 132 850 133 890 138 890 130 622 112 615 108 506 122 498zM243 562L275 550 422 642 424 713 243 600zM627 645L785 557 828 578V607L627 685zM627 466L650 480 627 486zM249 704L345 770 252 805zM312 905L428 857 430 985zM550 828L590 813 762 925 552 1014zM712 764L828 715V835z"/>
            <path d="M560 265L828 385 828 420 720 480 650 480 627 466V530L550 560z" fill="#001474" opacity=".85"/>
            <path d="M575 255L622 250 830 355 828 395z" fill="#0038a0"/>
            <path d="M575 380L627 360 720 450 720 478 650 480 627 466V520L575 535z" fill="#0010a0"/>
            <path d="M627 466L650 480 627 486z" fill="#eee"/>
            <path d="M555 270L575 275 575 520 548 560z" fill="#000c60" opacity=".4"/>
            <path d="M160 290L400 560 410 555 160 405z" fill="#00308c"/>
            <path d="M160 410L410 545 415 640 275 550 243 562 243 600 175 545z" fill="#00287c"/>
            <path d="M160 408L410 545" stroke="#001c60" stroke-width="12"/>
            <path d="M175 520L240 552V600L175 545z" fill="#000c60" opacity=".7"/>
            <path d="M130 540L480 745V850L430 848 250 704 130 622z" fill="#0022a8"/>
            <path d="M170 655L249 704V900L170 880z" fill="#00006c" opacity=".5"/>
            <path d="M180 670V880" stroke="#000058" stroke-width="10" opacity=".5"/>
            <path d="M252 805L345 770 430 845 428 857 312 905 252 870z" fill="#000880"/>
            <path d="M178 885L430 985 490 1060 488 1165 178 945z" fill="#0008a0"/>
            <path d="M178 890L312 975 430 1040" stroke="#000070" stroke-width="12" fill="none"/>
            <path d="M590 813L712 764 828 835 890 900 762 925z" fill="#000478" opacity=".8"/>
            <path d="M552 1014L762 925 840 900 890 915 880 1000 625 1113 552 1080z" fill="#0006b0"/>
            <path d="M555 1040L890 910" stroke="#000090" stroke-width="10"/>
            <path d="M548 640L627 612V690L548 715z" fill="#000c78"/>
            <path d="M785 557L885 525 890 585 828 607V578z" fill="#000a68"/>
            <path d="M828 715L890 690V910L828 880z" fill="#00006c" opacity=".7"/>
            <path d="M548 525L840 418 882 442 885 525 550 640z" fill="#0038a4"/>
            <path d="M548 560L882 442 885 525 550 640z" fill="#0030a0"/>
            <path d="M548 715L895 583 965 548 962 658 828 715 550 828z" fill="#001eb0"/>
            <path d="M555 596V640" stroke="#001060" stroke-width="6"/>
          </g>
          <path fill="url(#gC)" d="M500 690L530 640 640 700 640 740 665 860 685 1000 732 1290 740 1370 690 1400 600 1220 540 930z"/>
          <path d="M500 690L545 690 580 885 620 1100 660 1300 600 1220 540 930z" opacity=".14"/>
          <path d="M550 690L580 885M612 1060L645 1290" stroke="#000" stroke-width="18" opacity=".2" fill="none"/>
          <path fill="url(#gB)" d="M915 280L1040 205 1055 420 1075 590 1110 870 1153 1290 1162 1450 1165 1480 1095 1560 1095 1750 1070 1760 1052 1450 1035 1290 1005 1010 968 700 940 480z"/>
          <path d="M915 280L980 250 1000 480 1020 700 1060 1010 1095 1450 1095 1750 1070 1760 1052 1450 1035 1290 1005 1010 968 700 940 480z" opacity=".12"/>
          <path d="M980 260L996 480 1014 680 1055 1010 1080 1290 1096 1480" stroke="#000" stroke-width="18" opacity=".2" fill="none"/>
          <path fill="url(#gD)" d="M1268 390L1395 265 1402 400 1440 850 1475 1290 1487 1600V1880L1430 1890V1780L1368 1700V1550L1350 1290 1345 1200 1300 750z"/>
          <path d="M1268 390L1338 330 1358 600 1395 920 1420 1400 1430 1780 1368 1700V1550L1350 1290 1345 1200 1300 750z" opacity=".17"/>
          <path d="M1332 345L1350 600 1386 920 1408 1290" stroke="#000" stroke-width="18" opacity=".18" fill="none"/>
          <path fill="url(#gF)" d="M130 1045L210 1140 320 1240 520 1440 650 1570 700 1610 920 1730 950 1740 700 1490 470 1250 430 1215z"/>
          <path d="M185 1085L330 1220 520 1415 690 1585" stroke="#000" stroke-width="18" opacity=".22" fill="none"/>
          <path d="M140 1065L320 1240 520 1440 650 1570" stroke="#a8c000" stroke-width="4" opacity=".4" fill="none"/>
          <path d="M688 1500L712 1740" stroke="#001860" stroke-width="14" opacity=".4"/>
          <path fill="url(#gE)" d="M820 830L940 700 970 950 1020 1240 1050 1450 1085 1725 1092 1900V2270L1040 2360 970 2330V1870L960 1775 980 1700 940 1560 925 1490 890 1290 855 1050z"/>
          <path d="M820 830L880 780 905 990 955 1290 995 1630 1008 1800 1030 1950 1030 2355 970 2330V1870L960 1775 980 1700 940 1560 925 1490 890 1290 855 1050z" opacity=".2"/>
          <path d="M880 800L905 990 948 1290 985 1560" stroke="#000" stroke-width="20" opacity=".14" fill="none"/>
          <path fill="url(#gG)" d="M545 1150L730 1340 860 1480 990 1630 1008 1775 920 1720 700 1490 540 1330 470 1245z"/>
          <path d="M548 1160L730 1340 860 1480 992 1632" stroke="#b0b000" stroke-width="4" opacity=".5" fill="none"/>
          <path d="M484 1247L560 1315 700 1455 860 1630 1000 1768" stroke="#000" stroke-width="15" opacity=".28" fill="none"/>
          <path fill="url(#gTop)" fill-rule="evenodd" d="M985 66Q1200 118 1410 150L1442 215 1395 268 1268 392 1050 600 940 700 820 836 690 990 545 1160 480 1248 430 1215 130 1045 70 995 100 955 250 775 380 630 530 475 615 403 740 290 897 148zM1040 210L980 250 920 300 730 480 605 580 608 594 795 657 860 585 940 508 1050 410 1222 252zM500 705L400 820 258 980 435 1067 580 885 695 765 635 742 570 715z"/>
          <path d="M985 66L980 135 830 265 640 420 530 530 380 700 170 940 258 980 435 1067 415 1165 430 1215 130 1045 70 995 100 955 250 775 380 630 530 475 615 403 740 290 897 148z" fill="#500800" opacity=".38"/>
          <path d="M985 66Q1200 118 1410 150L1250 215 1000 150 980 135z" fill="#600400" opacity=".4"/>
          <path d="M990 150L1250 215 1222 252 1040 210 1010 195z" fill="#400000" opacity=".35"/>
          <path d="M985 150L1130 180 1262 210" stroke="#400000" stroke-width="8" opacity=".5" fill="none"/>
          <path d="M1410 150L1250 215 1222 252 1050 410 940 508 860 585 795 657 580 885 435 1067 415 1165 470 1110 640 910 800 730 960 560 1180 370z" fill="#500400" opacity=".36"/>
          <path d="M540 615L608 592 795 657 760 705z" fill="#901c00"/>
          <path d="M540 625L760 698" stroke="#400800" stroke-width="12" opacity=".7"/>
          <path d="M545 640L750 708 695 765 600 722z" fill="#641400" opacity=".55"/>
          <path d="M130 1045L430 1200 480 1248 430 1215z" fill="#c04400" opacity=".7"/>
          <path d="M420 1170L480 1248M258 980L435 1067" stroke="#c03800" stroke-width="4" opacity=".6"/>
          <path d="M535 1170l10 15M860 790L940 705M1340 335L1395 275" stroke="#3c0800" stroke-width="14" opacity=".45"/>
          <g stroke="#20c840" stroke-width="4"><path d="M1310 102V132M716 484V545M1050 598V655M409 905V955"/></g>
          <path d="M702 540H732L717 578zM402 955H418L410 974z" fill="#004c10"/>
          <path d="M1035 650H1068L1052 694z" fill="#087008"/>
          <ellipse cx="1101" cy="2384" rx="9" ry="6" fill="#eee"/><ellipse cx="1460" cy="2224" rx="9" ry="6" fill="#eee"/>
        </g>
      </svg>
      <div class="plotbar">
        <label class="combo disp"><select aria-label="Result type"><option>Displacement</option></select><svg class="i8"><use href="#chev"/></svg></label>
        <label class="combo total"><select aria-label="Component"><option>TOTAL</option></select><svg class="i8"><use href="#chev"/></svg></label>
        <label class="combo unit"><select aria-label="Unit"><option>mm</option></select><svg class="i8"><use href="#chev"/></svg></label>
        <button class="gear" aria-label="Plot settings"><svg viewBox="0 0 16 16"><circle cx="6" cy="9" r="3.500" fill="none" stroke="#444" stroke-width="2"/><path d="M6 3.500v2M6 12.500v2M.5 9h2M9.500 9h2M2 5l1.500 1.500M8.500 11.500L10 13M10 5L8.500 6.500M2 13l1.500-1.500" stroke="#444" stroke-width="1.500"/><circle cx="13" cy="4" r="2" fill="none" stroke="#444" stroke-width="1.300"/></svg></button>
      </div>
      <div class="legend">
        <div class="scale"></div>
        <ol><li>0.287</li><li>0.275</li><li>0.263</li><li>0.251</li><li>0.239</li><li>0.227</li><li>0.215</li><li>0.203</li><li>0.191</li><li>0.179</li><li>0.167</li><li>0.156</li><li>0.144</li><li>0.132</li><li>0.120</li><li>0.108</li><li>0.096</li><li>0.084</li><li>0.072</li><li>0.060</li><li>0.048</li><li>0.036</li><li>0.024</li><li>0.012</li><li>0.000</li></ol>
      </div>
      <div class="foot">
        <svg class="triad" viewBox="0 0 72 68"><path d="M38 40V22" stroke="#1414a0"/><path d="M38 40L20 46" stroke="#a01c14"/><path d="M38 40L50 46" stroke="#146414"/><path d="M38 11l6 12H32z" fill="#0c0c98"/><path d="M12 46l9-7 4 10z" fill="#c8281c"/><path d="M58 51l-6-12-6 9 2 4z" fill="#0c7c14"/><text x="34" y="8" fill="#3c50d8">Z</text><text x="1" y="53" fill="#e03c28">X</text><text x="59" y="57" fill="#30b838">Y</text></svg>
        <p>CONTOUR: DISPLACEMENT (mm) (TOTAL)<br>DEFORMED TOTAL: (MIN=0, MAX=0.287078)<br>OUTPUT SET: SUBCASE 1</p>
      </div>
      <svg class="cursor" viewBox="0 0 12 20"><path d="M1 1v15l3.500-3.500L7 18l2.500-1L7 11.500h4.500z" fill="#fff" stroke="#111"/></svg>
      <svg class="docwin" viewBox="0 0 52 12"><path d="M1 5h11v3H1zM21 3h8v8h-8zM24 3V1h8v8h-3M24 6h2v2h-2z" fill="none" stroke="#444" stroke-width="1.300"/><path d="M41 1h3l2 3 2-3h3l-3 5 3 5h-3l-2-3-2 3h-3l3-5z" fill="#fff" stroke="#444"/></svg>
      <svg class="viewcube" viewBox="0 0 90 80"><defs><radialGradient id="sh"><stop offset="0" stop-color="#999"/><stop offset="1" stop-color="#eee" stop-opacity="0"/></radialGradient></defs><ellipse cx="45" cy="60" rx="43" ry="16" fill="url(#sh)"/><path d="M11 10L48 3 80 12 38 21z" fill="#f6f6f6"/><path d="M11 10L38 21V71L14 54z" fill="#ececec"/><path d="M38 21L80 12 79 57 38 71z" fill="#e2e2e2"/><path d="M11 10L48 3 80 12 38 21zM11 10L14 54 38 71V21M80 12L79 57 38 71" fill="none" stroke="#999" stroke-dasharray="7 3"/><text transform="rotate(24 14 38)" x="14" y="38">FRONT</text><text class="big" transform="rotate(-11 46 48)" x="46" y="49">RIGHT</text><path d="M40 9l6 3M46 8l4 3M53 9l4 1" stroke="#999"/></svg>
      <svg class="navbar" viewBox="0 0 36 232"><rect x="1" y="1" width="34" height="230" rx="4" fill="#f0f0f0" stroke="#a8a8a8" stroke-width="2"/><g fill="none" stroke="#8c929a" stroke-width="1.200"><circle cx="27" cy="8" r="3.500"/><path d="M25.500 6.500l3 3M28.500 6.500l-3 3"/><path d="M18 24h11v11a11 11 0 1 1-11-11z" fill="#e4ecf2"/><circle cx="18" cy="34" r="6" fill="#f4f4f4"/><path d="M10 42l4-4M26 42l-4-4M5 62h26"/><path d="M13 91l-6-8c-2-3 1-4 3-2l3 3-3-11c0-3 3-3 4 0l2 7-1-9c0-3 3-3 4 0l1 9 2-8c1-3 4-2 3 1l-2 9 3-4c2-2 4-1 3 1l-5 12z" fill="#fafafa"/><path d="M11 102v10M6 107h10M6 115h10" stroke-width="2.500"/><circle cx="22" cy="116" r="5"/><path d="M25 120l5 4" stroke-width="2.500"/><ellipse cx="18" cy="155" rx="10" ry="4"/><ellipse cx="18" cy="155" rx="4" ry="11"/><path d="M18 151v8M14 155h8M21 147l2 2M26 152v4"/><path d="M6 191h22v16H6zM6 191l8-5v4l7-4v5" fill="#e8eef4"/><path d="M10 195h14v7H10z" fill="#ccd8e4"/><circle cx="27" cy="223" r="3.500"/><path d="M25 223h4"/></g><path d="M15 55h5l-2.500 3zM15 133h5l-2.500 3zM15 175h5l-2.500 3z" fill="#777"/></svg>
    </div>
    <div class="docs">
      <svg viewBox="0 0 16 16"><path d="M1 9V1h9v2M3 9V4h9v2M6 7h9v8H6z" fill="none" stroke="#ddd" stroke-width="1.300"/></svg>
      <svg viewBox="0 0 16 16"><path d="M1 1h6v5H1zM9 1h6v5H9zM1 9h6v6H1zM9 9h6v6H9z" fill="none" stroke="#ddd" stroke-width="1.300"/></svg>
      <svg viewBox="0 0 16 16"><path d="M1 1h14v5H1zM1 9h14v6H1z" fill="none" stroke="#ddd" stroke-width="1.300"/></svg>
      <svg viewBox="0 0 16 16"><path d="M1 1h5v14H1zM9 1h5v14H9z" fill="none" stroke="#ddd" stroke-width="1.300"/></svg>
      <svg viewBox="0 0 16 16"><path d="M3 12h10L8 4z" fill="#eee"/></svg>
      <button class="home">My Home</button>
      <button class="doc">200-350.iam <svg viewBox="0 0 8 8"><path d="M1 0l6 8M7 0L1 8" stroke="#333" stroke-width="1.800"/></svg></button>
    </div>
  </section>
</main>

<footer class="status"><span>Ready</span><span class="num">39</span><span class="num">24</span></footer>
</body>
</html>
```
FILE: styles.css
```
* { box-sizing: border-box; }
body {
  margin: 0;
  height: 100vh;
  display: flex;
  flex-direction: column;
  overflow: hidden;
  background: #f5f5f5;
  color: #3a3a3a;
  font: 12px/15px Roboto, "Open Sans", sans-serif;
}
button, select, input { font: inherit; color: inherit; margin: 0; padding: 0; border: 0; background: none; border-radius: 0; }
select { appearance: none; }
ul, ol { list-style: none; margin: 0; padding: 0; }
h2, p { margin: 0; font: inherit; }
svg { display: block; flex: none; }
.sprite { position: absolute; width: 0; height: 0; }
.i16 { width: 16px; height: 16px; }
.i8 { width: 8px; height: 8px; }

/* title bar */
.titlebar { display: flex; align-items: center; height: 26px; flex: none; background: #525252; color: #d2d2d2; }
.quick { display: flex; align-items: center; gap: 8px; color: #bbb; }
.quick .tuck { margin-left: -4px; }
.logo { width: 23px; height: 24px; font-family: Roboto, sans-serif; }
.tcombo { position: relative; display: block; width: 100px; height: 20px; }
.tcombo select { width: 100%; height: 100%; padding: 0 4px; background: #8a8a8a; color: #6a6a6a; font-style: italic; }
.tcombo svg { position: absolute; right: 3px; top: 7px; color: #444; }
.fx { width: 16px; color: #1c1c1c; font: italic bold 15px/16px "Liberation Serif", serif; }
.fx sub { font-size: 9px; line-height: 1px; }
.apptitle { flex: 1; display: flex; justify-content: center; gap: 12px; padding-left: 8px; white-space: nowrap; }
.account { display: flex; align-items: center; gap: 4px; }
.search { width: 180px; height: 20px; padding: 0 5px; background: #8e8e8e; margin-bottom: 5px; }
.search::placeholder { color: #d0d0d0; opacity: 1; }
.user { margin-right: 8px; }
.account .i8 + .i16 { margin-left: 8px; }
.rule { width: 1px; height: 18px; margin: 0 4px; background: #777; }
.account .win { margin-left: 3px; margin-right: 3px; }
.account .i8 + .win { margin-left: 20px; }

/* ribbon tabs */
.tabs { display: flex; flex: none; height: 21px; background: #525252; border-bottom: 1px solid #90ee80; color: #cfcfcf; }
.tabs button { padding: 0 9px 0 10px; white-space: nowrap; }
.tabs .file { width: 42px; margin-right: 2px; background: #ff8a22; color: #fff; padding: 0; }
.tabs .on { width: 112px; margin-left: 2px; padding: 0; background: #90f080; color: #3a5a3a; }
.collapse { width: 24px; height: 12px; margin: 4px 0 0 22px; }

/* ribbon */
.ribbon { display: flex; flex: none; height: 93px; background: #f5f5f5; }
.panel { display: flex; flex-direction: column; border-right: 1px solid #dcdcdc; }
.tools { display: flex; flex: 1; justify-content: center; padding-top: 2px; }
.panel h2 { height: 17px; display: flex; justify-content: center; align-items: center; gap: 6px; }
.tool { display: flex; flex-direction: column; align-items: center; height: 72px; padding-top: 3px; border: 1px solid transparent; line-height: 15px; white-space: nowrap; text-align: center; }
.tool > svg:first-child { width: 30px; height: 30px; margin-bottom: 4px; }
.tool .i8 { margin-top: 1px; width: 6px; }
.tool.on { background: linear-gradient(#b4d2f2, #cbe2f8); border: 1px solid #2a72b8; }
.p-system { width: 51px; padding-right: 2px; }
.p-analysis { width: 163px; }
.p-analysis .tools { display: grid; grid-template-columns: 38px 38px 86px; }
.p-prepare { width: 340px; }
.p-prepare .tools { display: grid; grid-template-columns: 56px 68px 74px 78px 64px; }
.p-solve { width: 43px; }
.p-results { width: 501px; }
.p-results .tools { display: grid; justify-content: start; grid-template-columns: 74px 50px 58px 43px 176px 98px; }
.p-display { width: 105px; }
.p-support { width: 172px; }
.p-support .tools { justify-content: start; display: grid; grid-template-columns: 42px 52px 78px; }
.p-support .rcol { padding-left: 2px; }
.p-exit { width: 146px; border: 0; padding-left: 2px; }
.p-exit h2 { background: #90f080; margin-bottom: 1px; height: 16px; }
.rcol { display: flex; flex-direction: column; gap: 4px; padding-top: 2px; }
.rrow { display: flex; gap: 8px; }
.mini { display: flex; align-items: center; gap: 5px; height: 20px; white-space: nowrap; }
.rrow .mini { padding-left: 2px; }
.mini svg { width: 16px; height: 16px; }
.off { color: #a8a8a8; }
.subcase { position: relative; width: 170px; height: 21px; margin-bottom: -1px; display: block; }
.subcase select { width: 100%; height: 100%; padding: 0 6px; border: 1px solid #b4b4b4; background: #f4f4f4; color: #3a3a3a; }
.subcase svg { position: absolute; right: 2px; top: 7px; }

/* side browser */
.work { display: flex; flex: 1; min-height: 0; }
.side { display: flex; flex-direction: column; flex: none; width: 256px; background: #fff; border-right: 5px solid #585858; color: #111; }
.sidetabs { display: flex; align-items: center; flex: none; height: 25px; background: #585858; color: #e4e4e4; font: 11px/14px "DejaVu Sans Condensed", "DejaVu Sans", sans-serif; }
.stab { display: flex; align-items: center; height: 100%; padding: 0 3px; white-space: nowrap; }
.stab.on { background: #fff; color: #555; padding: 0 8px 0 2px; gap: 8px; }
.x { width: 8px; height: 8px; }
.plus { width: 8px; height: 8px; margin-left: 6px; margin-right: auto; }
.menu { width: 12px; height: 12px; margin-right: 10px; }
.menu:last-child { margin-right: 5px; }
.upper { display: flex; flex: none; }
.tree { flex: 1; min-width: 0; overflow: hidden; }
.tree li { display: flex; align-items: center; height: 18px; white-space: nowrap; }
.tree li svg { width: 16px; height: 16px; margin: 0 4px 0 2px; }
.tree i { position: relative; flex: none; width: 19px; height: 18px; }
.v, .t { background: repeating-linear-gradient(#888 0 1px, transparent 1px 2px) 10px 0 / 1px 18px no-repeat; }
.l { background: repeating-linear-gradient(#888 0 1px, transparent 1px 2px) 10px 0 / 1px 9px no-repeat; }
.t::before, .l::before { content: ""; position: absolute; left: 10px; right: 0; top: 9px; height: 1px; background: repeating-linear-gradient(90deg, #888 0 1px, transparent 1px 2px); }
.p::after, .m::after { content: ""; position: absolute; left: 6px; top: 5px; width: 9px; height: 9px; border: 1px solid #909090; background: linear-gradient(#2a4a90, #2a4a90) 1px 3px / 5px 1px no-repeat, #f4f4f4; }
.p::after { background: linear-gradient(#2a4a90, #2a4a90) 1px 3px / 5px 1px no-repeat, linear-gradient(#2a4a90, #2a4a90) 3px 1px / 1px 5px no-repeat, #f4f4f4; }
.vbar { display: flex; flex-direction: column; align-items: center; flex: none; width: 16px; background: #f0f0f0; color: #333; }
.vbar svg, .hbar svg { width: 10px; height: 18px; }
.up { transform: rotate(180deg); }
.vbar .rest { flex: 258; }
.vbar .thumb { flex: 117; width: 15px; background: #cdcdcd; }
.vbar.light { color: #777; }
.light .thumb { flex: 222; }
.light .rest { flex: 138; }
.hbar { display: flex; flex: none; height: 17px; background: #f0f0f0; color: #333; }
.hbar svg { width: 10px; height: 16px; margin: 0 3px; }
.hbar .thumb { width: 168px; background: #cdcdcd; }
.left { transform: rotate(90deg); }
.hbar .right { transform: rotate(-90deg); margin-left: auto; }
.second { height: 30px; border-top: 6px solid #4c4c4c; }
.modes { display: flex; align-items: center; height: 35px; flex: none; padding-left: 4px; font: 11px/14px "DejaVu Sans Condensed", "DejaVu Sans", sans-serif; }
.modes a { color: #333; text-decoration: none; padding-left: 4px; }
.modes .on { color: #2a8cc8; padding: 0 4px 0 0; border-right: 2px solid #999; }
.lower { display: flex; flex: 1; min-height: 0; }
.browser { flex: 1; min-width: 0; overflow: hidden; font: 11px/20px "DejaVu Sans Condensed", "DejaVu Sans", sans-serif; background: repeating-linear-gradient(#aaa 0 1px, transparent 1px 2px) 7px 20px / 1px 100% no-repeat; }
.browser li { display: flex; align-items: center; height: 20px; white-space: nowrap; }
.browser li svg { width: 16px; height: 16px; margin-right: 3px; }
.browser b { width: 16px; height: 20px; flex: none; display: flex; align-items: center; padding-left: 2px; }
.browser b::before { content: ""; width: 6px; height: 6px; border: solid #8c8c8c; border-width: 2px 2px 0 0; transform: rotate(45deg); }
.browser .rootrow { font-weight: bold; }

/* viewport */
.view { display: flex; flex-direction: column; flex: 1; min-width: 0; }
.canvas { position: relative; display: flex; flex-direction: column; flex: 1; min-height: 0; background: #eee; padding: 14px 14px 0; color: #3c3c3c; }
.model { position: absolute; left: 0; top: 0; width: 100%; height: 100%; }
.plotbar { position: relative; display: flex; align-items: center; gap: 2px; flex: none; height: 23px; padding-left: 2px; }
.combo { position: relative; display: block; height: 22px; }
.combo select { width: 100%; height: 100%; padding: 0 5px; border: 1px solid #b8b8b8; color: #666; }
.combo svg { position: absolute; right: 5px; top: 6px; }
.disp { width: 100px; }
.total { width: 61px; }
.unit { width: 48px; }
.gear { width: 20px; height: 20px; border: 1px solid #999; display: grid; place-items: center; }
.gear svg { width: 16px; height: 16px; }
.legend { position: relative; display: flex; flex: 1; min-height: 0; gap: 10px; margin-top: 14px; padding-left: 1px; }
.scale { width: 20px; background: repeating-linear-gradient(transparent 0 calc(100% / 24 - 1px), rgba(90, 90, 90, .5) calc(100% / 24 - 1px) calc(100% / 24)), linear-gradient(#ff1800 0%, #ff3000 8%, #ff6000 18%, #ff9800 30%, #ffc800 38%, #f8e800 43%, #e0ec00 47%, #80e000 52%, #30d800 58%, #00d010 64%, #00d868 72%, #00e8c0 77%, #00e8ff 81%, #00c0ff 86%, #0080ff 91%, #0040ff 96%, #0008f8 100%); }
.legend ol { display: flex; flex-direction: column; justify-content: space-between; margin: -13px 0 -6px; font: 13px/18px "Liberation Sans", Arial, sans-serif; }
.foot { position: relative; display: flex; flex: none; height: 100px; font: 13px/21px "Liberation Sans", Arial, sans-serif; }
.foot p { margin: 31px 0 0 33px; white-space: nowrap; }
.triad { width: 72px; height: 68px; margin-top: 8px; overflow: visible; font: 13px "Liberation Sans", Arial, sans-serif; }
.cursor { position: absolute; left: 53px; top: 46px; width: 12px; height: 20px; }
.docwin { position: absolute; right: 1px; top: 6px; width: 52px; height: 12px; }
.viewcube { position: absolute; right: 18px; top: 53px; width: 90px; height: 80px; fill: #8c8c8c; font: bold 7px Roboto, sans-serif; }
.viewcube .big { font-size: 10px; }
.navbar { position: absolute; right: 0; top: 144px; width: 36px; height: 232px; }

/* document tabs */
.docs { display: flex; align-items: center; flex: none; height: 24px; gap: 8px; padding-left: 4px; background: #585858; color: #ddd; }
.docs > svg { width: 16px; height: 16px; }
.docs .home { height: 24px; padding: 0 10px 0 9px; border-left: 1px solid #777; margin: 0 -8px 0 -4px; }
.docs .doc { display: flex; align-items: center; gap: 7px; height: 24px; padding: 0 10px 0 9px; background: #f5f5f5; color: #555; }
.docs .doc svg { width: 9px; height: 9px; }

.status { display: flex; align-items: center; flex: none; height: 24px; padding: 2px 18px 0 0; background: #f5f5f5; color: #222; }
.num { margin-left: 24px; }
.status span:first-child { margin-right: auto; }
```
